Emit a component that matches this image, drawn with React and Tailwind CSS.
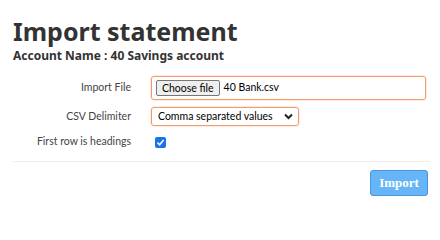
export default function App() {
  return (
    <div className="w-[440px] h-[206px] bg-white px-[13px] pt-[16px] text-[#333] font-['Lato',sans-serif] overflow-hidden">
      <h1 className="text-[25px] leading-[30px] font-bold font-['Noto_Sans',sans-serif]">Import statement</h1>
      <h2 className="text-[12px] leading-[16px] mt-[2px] font-bold font-['Noto_Sans',sans-serif]">Account Name : 40 Savings account</h2>

      <div className="mt-[12px] flex flex-col gap-[7px] text-[10.5px]">
        <div className="flex items-center">
          <label className="w-[118px] text-right text-[#444]">Import File</label>
          <div className="ml-[20px] w-[275px] h-[24px] rounded-[3px] border border-[#f19a6b] shadow-[0_0_2px_#f7b89a] flex items-center px-[4px]">
            <button className="h-[16px] px-[5px] bg-[#efefef] border border-[#767676] rounded-[2px] text-[10.5px] leading-[14px] text-black">Choose file</button>
            <span className="ml-[4px] text-black">40 Bank.csv</span>
          </div>
        </div>
        <div className="flex items-center">
          <label className="w-[118px] text-right text-[#444]">CSV Delimiter</label>
          <div className="ml-[20px] w-[148px] h-[19px] rounded-[3px] border border-[#f19a6b] shadow-[0_0_2px_#f7b89a] flex items-center justify-between pl-[6px] pr-[5px] text-black whitespace-nowrap">
            <span>Comma separated values</span>
            <svg width="9" height="7" viewBox="0 0 9 7"><path d="M1 1.5 L4.5 5 L8 1.5" fill="none" stroke="#222" strokeWidth="2" /></svg>
          </div>
        </div>
        <div className="flex items-center h-[16px] mt-[1px]">
          <label className="w-[118px] text-right text-[#444]">First row is headings</label>
          <span className="ml-[24px] w-[11px] h-[11px] rounded-[2px] bg-[#1a73e8] flex items-center justify-center">
            <svg width="9" height="9" viewBox="0 0 9 9"><path d="M1.5 4.6 L3.6 6.7 L7.6 2" fill="none" stroke="white" strokeWidth="1.6" /></svg>
          </span>
        </div>
      </div>

      <div className="mt-[11px] border-t border-[#eeeeee] w-[417px]"></div>

      <div className="flex justify-end w-[415px] mt-[8px]">
        <button className="w-[58px] h-[26px] rounded-[3px] bg-[#66b5f8] border border-[#4a95db] text-white text-[13px] font-bold font-['Liberation_Serif',serif]">Import</button>
      </div>
    </div>
  );
}
